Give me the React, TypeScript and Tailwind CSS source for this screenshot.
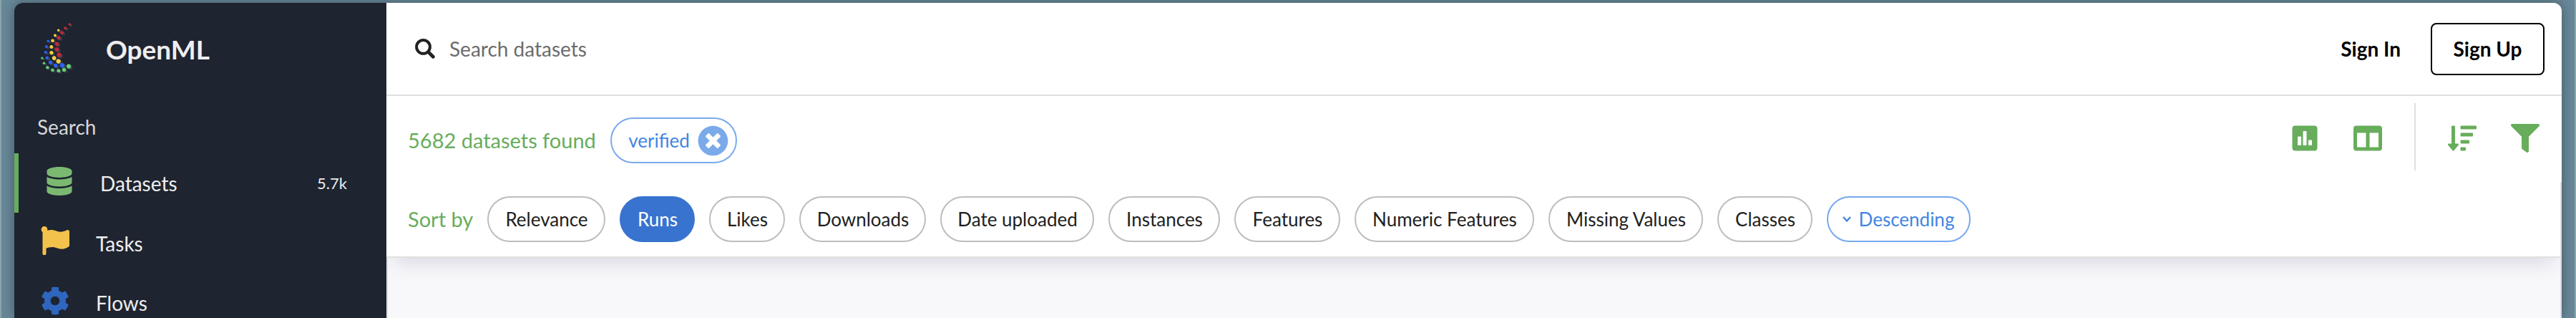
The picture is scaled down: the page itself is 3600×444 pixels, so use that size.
import React from "react";
import { FaDatabase, FaFlag, FaCog, FaTimesCircle, FaPoll, FaColumns, FaSortAmountDown, FaFilter } from "react-icons/fa";

const RED = "#c1293a", YEL = "#fbcf45", BLU = "#2b63f0", GRN = "#65cf75";
// x, y, radius, colour
const dots: [number, number, number, string][] = [
  [57.3, 14, 1.8, RED], [51.3, 19.2, 2, RED], [46.5, 25.6, 2.4, RED], [42, 32.7, 2.6, RED],
  [39.4, 41.2, 2.8, RED], [39.4, 49, 2.9, RED], [42.5, 56.7, 3.1, RED],
  [41.7, 22.2, 1.7, YEL], [37, 29.5, 2, YEL], [33.5, 36.7, 2.3, YEL], [31.8, 45.5, 2.4, YEL],
  [31.9, 53.6, 2.6, YEL], [35.6, 61.1, 2.8, YEL], [41.7, 65.6, 3.1, YEL],
  [27.2, 37.3, 1.7, BLU], [24.9, 45.1, 2, BLU], [23.8, 53, 2.1, BLU], [25.8, 60.8, 2.3, BLU],
  [30.5, 67.2, 2.6, BLU], [37.7, 71.6, 2.8, BLU], [46.9, 71.2, 3.2, BLU],
  [18.9, 61.1, 1.7, GRN], [21.5, 68.2, 1.8, GRN], [26.3, 74.3, 2.2, GRN], [33.4, 77.9, 2.3, GRN],
  [41.8, 78.8, 2.5, GRN], [49.5, 77.4, 2.7, GRN], [56, 72.6, 3.1, GRN],
];

function Logo() {
  return (
    <svg width="80" height="90" viewBox="0 0 80 90">
      {dots.map(([x, y, r], i) => <circle key={i} cx={x + 2.2} cy={y + 1.6} r={r} fill="#353e45" />)}
      {dots.map(([x, y, r, c], i) => <circle key={i} cx={x} cy={y} r={r} fill={c} />)}
    </svg>
  );
}

function SearchIcon() {
  return (
    <svg width="28" height="28" viewBox="0 0 28 28" fill="none" stroke="currentColor">
      <circle cx="11.5" cy="11.4" r="9.4" strokeWidth="4" />
      <path d="M18.6 18.6 L25.3 25.3" strokeWidth="4.8" strokeLinecap="round" />
    </svg>
  );
}

const pill = "flex h-16 shrink-0 items-center rounded-full border-2 text-[26px]";
const sorts: [string, string][] = [
  ["Relevance", "w-[165px] border-[#bdbdbd]"],
  ["Runs", "w-[105px] border-[#3873cf] bg-[#3873cf] text-white"],
  ["Likes", "w-[106px] border-[#bdbdbd]"],
  ["Downloads", "w-[177px] border-[#bdbdbd]"],
  ["Date uploaded", "w-[215px] border-[#bdbdbd]"],
  ["Instances", "w-[156px] border-[#bdbdbd]"],
  ["Features", "w-[148px] border-[#bdbdbd]"],
  ["Numeric Features", "w-[251px] border-[#bdbdbd]"],
  ["Missing Values", "w-[216px] border-[#bdbdbd]"],
  ["Classes", "w-[133px] border-[#bdbdbd]"],
];

function Sidebar() {
  return (
    <aside className="flex w-[520px] shrink-0 flex-col bg-[#1e2430] text-[#eeeeee]">
      <div className="flex h-[128px] shrink-0 items-center pl-5">
        <div className="mt-[-6px]"><Logo /></div>
        <span className="ml-[28px] text-[37px] font-bold leading-none">OpenML</span>
      </div>
      <div className="flex h-[82px] shrink-0 items-center pl-[32px] pt-[7px] text-[28px] text-[#d6d7d9]">Search</div>
      <div className="flex h-[83px] shrink-0 items-center border-l-6 border-[#67ad5b] pl-[37px] pr-[55px]">
        <FaDatabase size={40} color="#7bb972" className="mb-[6px]" />
        <span className="ml-[37px] text-[28px]">Datasets</span>
        <span className="ml-auto text-[22px]">5.7k</span>
      </div>
      <div className="flex h-[83px] shrink-0 items-center pl-[37px]">
        <FaFlag size={40} color="#f3c24d" className="mb-[5px]" />
        <span className="ml-[37px] pt-[2px] text-[28px]">Tasks</span>
      </div>
      <div className="flex h-[83px] shrink-0 items-center pl-[37px]">
        <FaCog size={40} color="#2f66be" className="mb-[3px]" />
        <span className="ml-[37px] pt-[2px] text-[28px]">Flows</span>
      </div>
    </aside>
  );
}

export default function App() {
  return (
    <div className="h-[444px] w-[3600px] overflow-hidden border-x-2 border-[#8aa3ab] bg-[#688899] px-[18px] pt-1 font-[Lato,sans-serif] text-[#212121]">
      <div className="flex h-[440px] overflow-hidden rounded-t-[12px] shadow-[0_0_18px_rgba(0,0,0,0.35)]">
        <Sidebar />
        <main className="flex min-w-0 grow flex-col overflow-hidden bg-[#f8f8fb]">
          <header className="relative z-10 flex h-[130px] shrink-0 items-center border-b-2 border-[#e0e0e0] bg-white pl-10 pr-6">
            <SearchIcon />
            <span className="ml-[20px] text-[28px] text-[#6c6c6c]">Search datasets</span>
            <span className="ml-auto text-[28px] font-bold text-black">Sign In</span>
            <span className="ml-[42px] flex h-[73px] w-[159px] items-center justify-center rounded-lg border-2 border-black text-[28px] font-bold text-black">Sign Up</span>
          </header>
          <section className="flex h-[226px] shrink-0 flex-col border-b-2 border-[#e0e0e0] bg-white pl-[30px] shadow-[0_16px_28px_-10px_rgba(60,40,90,0.16)]">
            <div className="flex h-[120px] shrink-0 items-center pt-1">
              <span className="text-[29px] text-[#67ad5b]">5682 datasets found</span>
              <span className={`${pill} ml-[20px] w-[177px] justify-end border-[#7baaea] pr-[10px] text-[#4285e2]`}>
                verified<FaTimesCircle size={43} color="#7baaea" className="ml-[11px]" />
              </span>
              <div className="-mt-[10px] ml-auto flex h-[94px] items-center text-[#67ad5b]">
                <FaPoll size={40} className="mt-1" />
                <FaColumns size={40} className="ml-[48px] mt-1" />
                <div className="ml-[45px] h-[94px] w-0.5 bg-[#e0e0e0]" />
                <FaSortAmountDown size={40} className="ml-[45px] mt-1" />
                <FaFilter size={40} className="ml-[48px] mr-[31px] mt-1" />
              </div>
            </div>
            <div className="flex h-[104px] shrink-0 items-center gap-5 border-r-2 border-[#e0e0e0]">
              <span className="w-[91px] whitespace-nowrap text-[29px] text-[#67ad5b]">Sort by</span>
              {sorts.map(([label, cls]) => <span key={label} className={`${pill} justify-center pl-px ${cls}`}>{label}</span>)}
              <span className={`${pill} w-[201px] justify-center border-[#76a9ee] pr-[2px] text-[#4285e2]`}>
                <svg width="14" height="10" viewBox="0 0 14 10" className="mr-[10px]"><path d="M2 2 L7 7.5 L12 2" fill="none" stroke="currentColor" strokeWidth="2.4" /></svg>
                Descending
              </span>
            </div>
          </section>
          <div className="grow border-x-2 border-[#dcdce0]" />
        </main>
      </div>
    </div>
  );
}
